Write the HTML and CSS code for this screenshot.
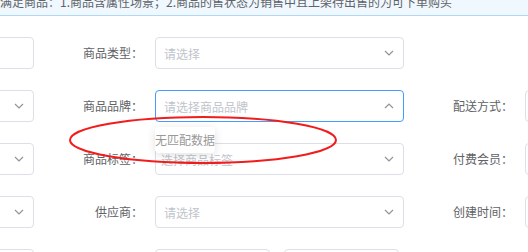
FILE: index.html
```html
<!DOCTYPE html>
<html lang="zh-CN">
<head>
    <meta charset="UTF-8">
    <title>商品筛选</title>
    <link rel="stylesheet" href="styles.css">
</head>
<body>
<div class="tip">满足商品：1.商品含属性场景；2.商品的售状态为销售中且上架待出售的为可下单购买</div>
<div class="form">
    <!-- row 1 -->
    <div class="item"><label>商品名称：</label><div class="control"></div></div>
    <div class="item"><label>商品类型：</label>
        <div class="control"><span class="ph">请选择</span><svg class="arrow" width="10" height="6" viewBox="0 0 10 6"><polyline points="1,1 5,5 9,1"/></svg></div>
    </div>
    <div class="item"></div>
    <!-- row 2 -->
    <div class="item"><label>商品状态：</label>
        <div class="control"><span class="ph">请选择</span><svg class="arrow" width="10" height="6" viewBox="0 0 10 6"><polyline points="1,1 5,5 9,1"/></svg></div>
    </div>
    <div class="item"><label>商品品牌：</label>
        <div class="control focus"><span class="ph">请选择商品品牌</span><svg class="arrow" width="10" height="6" viewBox="0 0 10 6"><polyline points="1,5 5,1 9,5"/></svg>
            <div class="popper">无匹配数据</div>
        </div>
    </div>
    <div class="item"><label>配送方式：</label><div class="control"></div></div>
    <!-- row 3 -->
    <div class="item"><label>商品分类：</label>
        <div class="control"><span class="ph">请选择</span><svg class="arrow" width="10" height="6" viewBox="0 0 10 6"><polyline points="1,1 5,5 9,1"/></svg></div>
    </div>
    <div class="item"><label>商品标签：</label>
        <div class="control multi"><span class="ph">选择商品标签</span><svg class="arrow" width="10" height="6" viewBox="0 0 10 6"><polyline points="1,1 5,5 9,1"/></svg></div>
    </div>
    <div class="item"><label>付费会员：</label><div class="control"></div></div>
    <!-- row 4 -->
    <div class="item"><label>商品来源：</label>
        <div class="control"><span class="ph">请选择</span><svg class="arrow" width="10" height="6" viewBox="0 0 10 6"><polyline points="1,1 5,5 9,1"/></svg></div>
    </div>
    <div class="item"><label>供应商：</label>
        <div class="control"><span class="ph">请选择</span><svg class="arrow" width="10" height="6" viewBox="0 0 10 6"><polyline points="1,1 5,5 9,1"/></svg></div>
    </div>
    <div class="item"><label>创建时间：</label><div class="control"></div></div>
    <!-- row 5 -->
    <div class="item"><label>商品编码：</label><div class="control"></div></div>
    <div class="item"><label>商品价格：</label>
        <div class="range">
            <div class="control half"></div>
            <span class="sep">-</span>
            <div class="control half"></div>
        </div>
    </div>
    <div class="item"></div>
</div>
<svg class="mark" width="528" height="252" viewBox="0 0 528 252">
    <ellipse cx="203" cy="140" rx="133" ry="23"/>
</svg>
</body>
</html>
```

FILE: styles.css
```css
html, body {
    margin: 0;
    padding: 0;
    width: 528px;
    height: 252px;
    overflow: hidden;
    background: #fff;
    font-family: "Noto Sans CJK SC", "Liberation Sans", sans-serif;
    font-size: 12px;
    color: #606266;
}

.tip {
    margin-top: -6px;
    line-height: 16px;
    padding: 0 0 5px 0;
    background: #f0f8ff;
    border-bottom: 1px solid #b3d8f5;
    white-space: nowrap;
    color: #606266;
}

.form {
    display: grid;
    grid-template-columns: repeat(3, 359px);
    column-gap: 11px;
    row-gap: 21px;
    margin-left: -325px;
    padding-top: 21px;
}

.item {
    display: flex;
    height: 32px;
}

.item label {
    width: 110px;
    flex: none;
    box-sizing: border-box;
    padding-right: 12px;
    text-align: right;
    line-height: 32px;
    color: #606266;
    white-space: nowrap;
}

.control {
    position: relative;
    display: flex;
    align-items: center;
    justify-content: space-between;
    width: 249px;
    height: 32px;
    box-sizing: border-box;
    padding: 0 9px 0 8px;
    border: 1px solid #dcdfe6;
    border-radius: 4px;
    background: #fff;
}

.control.focus {
    border-color: #409eff;
}

.control.multi {
    padding-left: 5px;
}

.ph {
    color: #c0c4cc;
    white-space: nowrap;
}

.arrow {
    fill: none;
    stroke: #909399;
    stroke-width: 1.2;
}

.range {
    display: flex;
    align-items: center;
}

.control.half {
    width: 115px;
}

.sep {
    width: 14px;
    text-align: center;
    color: #606266;
}

.popper {
    position: absolute;
    top: 36px;
    left: -1px;
    width: 60px;
    height: 26px;
    line-height: 26px;
    background: #fff;
    border-radius: 4px;
    box-shadow: 0 2px 10px rgba(0, 0, 0, 0.12);
    color: #999;
    white-space: nowrap;
    z-index: 2;
}

.mark {
    position: absolute;
    left: 0;
    top: 0;
    pointer-events: none;
}

.mark ellipse {
    fill: none;
    stroke: #f21c1c;
    stroke-width: 2;
}
```
